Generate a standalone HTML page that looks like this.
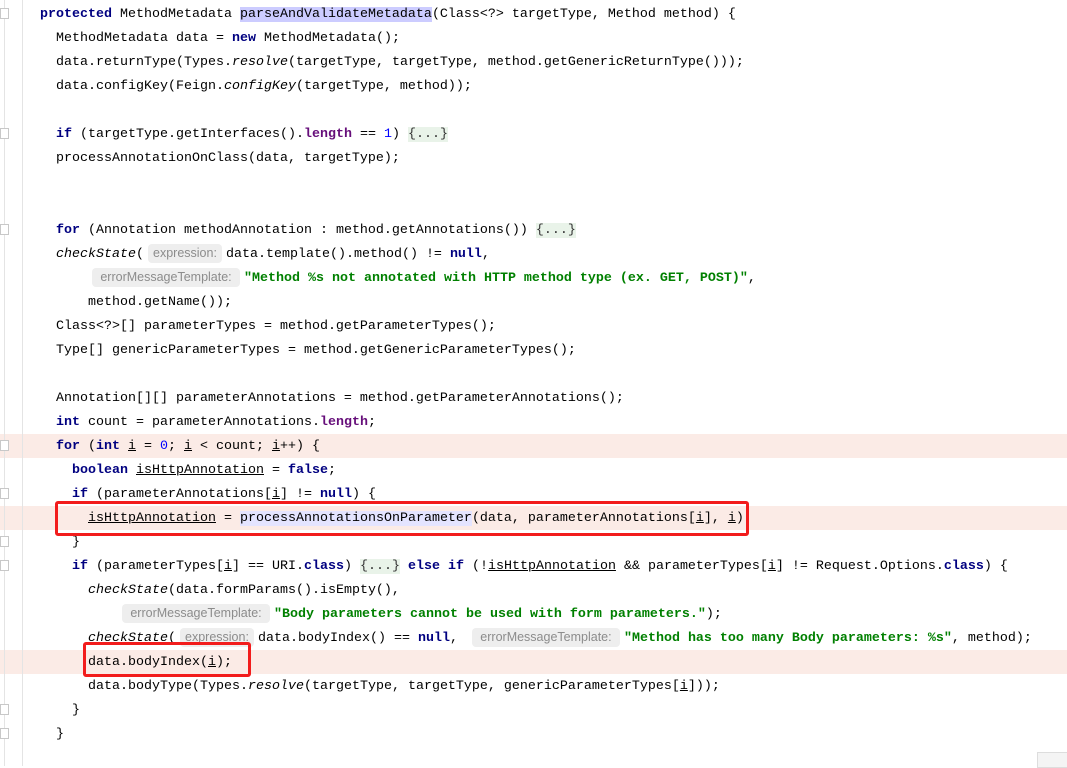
<!DOCTYPE html>
<html><head><meta charset="utf-8"><style>
body{margin:0;width:1067px;height:766px;background:#fff;overflow:hidden;position:relative;font-family:"Liberation Mono",monospace;font-size:13.33px;color:#000}
.l{position:absolute;left:0;height:24px;line-height:24px;white-space:pre;width:1067px}
.t{margin-top:1px}
.hl{background:#fbebe6}
.k{color:#000080;font-weight:bold}
.n{color:#0000ff}
.f{color:#660e7a;font-weight:bold}
.s{color:#008000;font-weight:bold}
.i{font-style:italic}
.u{text-decoration:underline}
.fold{background:#e9f3e9;color:#333}
.h{display:inline-block;font-family:"Liberation Sans",sans-serif;font-size:12.5px;color:#8c8c8c;background:#eeeeee;border-radius:4px;height:19px;line-height:19px;vertical-align:middle;text-align:center;margin:0 4px}
.box{position:absolute;border:3px solid #f21c1c;border-radius:3px}
.g{position:absolute;top:0;height:766px;width:1px;background:#e4e4e4}
.fm{position:absolute;left:0;width:7px;height:9px;border:1px solid #c8c8c8;background:#fff}
</style></head><body>
<div class="l hl" style="top:434px"></div>
<div class="l hl" style="top:506px"></div>
<div class="l hl" style="top:650px"></div>
<div class="g" style="left:4px"></div>
<div class="g" style="left:22px"></div>
<div class="fm" style="top:8px"></div>
<div class="fm" style="top:128px"></div>
<div class="fm" style="top:224px"></div>
<div class="fm" style="top:440px"></div>
<div class="fm" style="top:488px"></div>
<div class="fm" style="top:536px"></div>
<div class="fm" style="top:560px"></div>
<div class="fm" style="top:704px"></div>
<div class="fm" style="top:728px"></div>

<div class="l" style="top:3px;left:40px"><span class="k">protected</span> MethodMetadata <span style="background:#ccccff">parseAndValidateMetadata</span>(Class&lt;?&gt; targetType, Method method) {</div>
<div class="l" style="top:27px;left:56px">MethodMetadata data = <span class="k">new</span> MethodMetadata();</div>
<div class="l" style="top:51px;left:56px">data.returnType(Types.<span class="i">resolve</span>(targetType, targetType, method.getGenericReturnType()));</div>
<div class="l" style="top:75px;left:56px">data.configKey(Feign.<span class="i">configKey</span>(targetType, method));</div>
<div class="l" style="top:123px;left:56px"><span class="k">if</span> (targetType.getInterfaces().<span class="f">length</span> == <span class="n">1</span>) <span class="fold">{...}</span></div>
<div class="l" style="top:147px;left:56px">processAnnotationOnClass(data, targetType);</div>
<div class="l" style="top:219px;left:56px"><span class="k">for</span> (Annotation methodAnnotation : method.getAnnotations()) <span class="fold">{...}</span></div>
<div class="l" style="top:243px;left:56px"><span class="i">checkState</span>(<span class="h" style="width:74px">expression:</span>data.template().method() != <span class="k">null</span>,</div>
<div class="l" style="top:267px;left:92px"><span class="h" style="width:148px;margin-left:0">errorMessageTemplate:</span><span class="s">"Method %s not annotated with HTTP method type (ex. GET, POST)"</span>,</div>
<div class="l" style="top:291px;left:88px">method.getName());</div>
<div class="l" style="top:315px;left:56px">Class&lt;?&gt;[] parameterTypes = method.getParameterTypes();</div>
<div class="l" style="top:339px;left:56px">Type[] genericParameterTypes = method.getGenericParameterTypes();</div>
<div class="l" style="top:387px;left:56px">Annotation[][] parameterAnnotations = method.getParameterAnnotations();</div>
<div class="l" style="top:411px;left:56px"><span class="k">int</span> count = parameterAnnotations.<span class="f">length</span>;</div>
<div class="l" style="top:435px;left:56px"><span class="k">for</span> (<span class="k">int</span> <span class="u">i</span> = <span class="n">0</span>; <span class="u">i</span> &lt; count; <span class="u">i</span>++) {</div>
<div class="l" style="top:459px;left:72px"><span class="k">boolean</span> <span class="u">isHttpAnnotation</span> = <span class="k">false</span>;</div>
<div class="l" style="top:483px;left:72px"><span class="k">if</span> (parameterAnnotations[<span class="u">i</span>] != <span class="k">null</span>) {</div>
<div class="l" style="top:507px;left:88px"><span class="u">isHttpAnnotation</span> = <span style="background:#e4e4ff">processAnnotationsOnParameter</span>(data, parameterAnnotations[<span class="u">i</span>], <span class="u">i</span>);</div>
<div class="l" style="top:531px;left:72px">}</div>
<div class="l" style="top:555px;left:72px"><span class="k">if</span> (parameterTypes[<span class="u">i</span>] == URI.<span class="k">class</span>) <span class="fold">{...}</span> <span class="k">else if</span> (!<span class="u">isHttpAnnotation</span> &amp;&amp; parameterTypes[<span class="u">i</span>] != Request.Options.<span class="k">class</span>) {</div>
<div class="l" style="top:579px;left:88px"><span class="i">checkState</span>(data.formParams().isEmpty(),</div>
<div class="l" style="top:603px;left:122px"><span class="h" style="width:148px;margin-left:0">errorMessageTemplate:</span><span class="s">"Body parameters cannot be used with form parameters."</span>);</div>
<div class="l" style="top:627px;left:88px"><span class="i">checkState</span>(<span class="h" style="width:74px">expression:</span>data.bodyIndex() == <span class="k">null</span>, <span class="h" style="width:148px;margin-left:6px">errorMessageTemplate:</span><span class="s">"Method has too many Body parameters: %s"</span>, method);</div>
<div class="l" style="top:651px;left:88px">data.bodyIndex(<span class="u">i</span>);</div>
<div class="l" style="top:675px;left:88px">data.bodyType(Types.<span class="i">resolve</span>(targetType, targetType, genericParameterTypes[<span class="u">i</span>]));</div>
<div class="l" style="top:699px;left:72px">}</div>
<div class="l" style="top:723px;left:56px">}</div>

<div class="box" style="left:55px;top:501px;width:688px;height:29px"></div>
<div class="box" style="left:83px;top:642px;width:162px;height:29px"></div>
<div style="position:absolute;left:1037px;top:752px;width:30px;height:14px;border:1px solid #ddd;background:#f4f4f4"></div>
</body></html>
